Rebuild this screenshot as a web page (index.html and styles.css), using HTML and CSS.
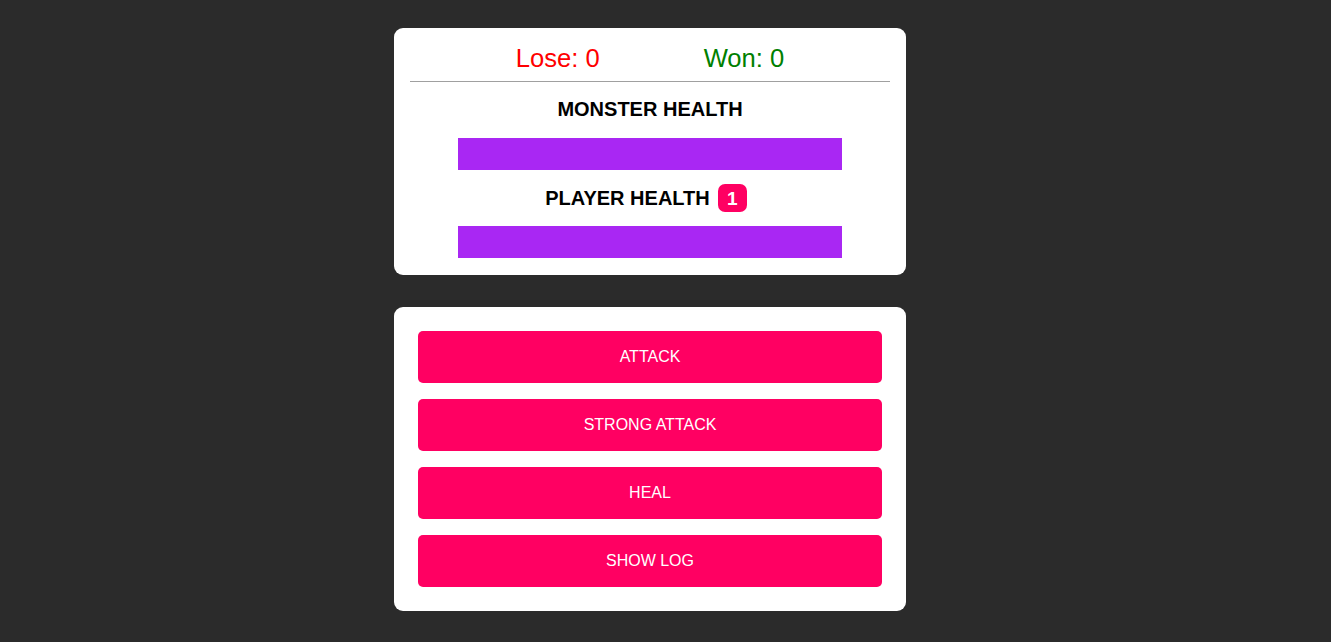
FILE: index.html
```html
<!DOCTYPE html>
<html lang="en">
<head>
<meta charset="utf-8">
<title>Monster Slayer</title>
<link rel="stylesheet" href="styles.css">
</head>
<body>
<main class="game">
  <section class="card health-card">
    <div class="scores">
      <span class="score lose">Lose: 0</span>
      <span class="score won">Won: 0</span>
    </div>
    <hr class="divider">
    <h2 class="health-title monster-title">MONSTER HEALTH</h2>
    <div class="bar"></div>
    <h2 class="health-title player-title">PLAYER HEALTH <span class="badge">1</span></h2>
    <div class="bar"></div>
  </section>
  <section class="card controls">
    <button class="btn">ATTACK</button>
    <button class="btn">STRONG ATTACK</button>
    <button class="btn">HEAL</button>
    <button class="btn">SHOW LOG</button>
  </section>
</main>
</body>
</html>
```
FILE: styles.css
```css
* { box-sizing: border-box; }
html, body {
  margin: 0;
  padding: 0;
  background: #2b2b2b;
  font-family: "Liberation Sans", Arial, sans-serif;
}
.game {
  padding: 28px 31px 0 0;
  display: flex;
  flex-direction: column;
  align-items: center;
}
.card {
  width: 512px;
  background: #ffffff;
  border-radius: 9px;
}
.health-card {
  padding: 16px 16px 17px;
}
.scores {
  display: flex;
  justify-content: center;
  gap: 104px;
  height: 29px;
  line-height: 29px;
  font-size: 25.6px;
  margin-bottom: 8px;
}
.lose { color: #ff0000; }
.won { color: #008000; }
.divider {
  margin: 0 0 16px;
  border: 0;
  border-top: 1px solid #a0a0a0;
  height: 0;
}
.health-title {
  margin: 0;
  font-size: 20px;
  font-weight: bold;
  color: #000;
  text-align: center;
  line-height: 23px;
}
.monster-title { margin-bottom: 17px; }
.player-title {
  margin: 14px 0;
  padding-right: 8px;
  height: 28px;
  display: flex;
  justify-content: center;
  align-items: center;
  gap: 8px;
}
.badge {
  display: inline-flex;
  align-items: center;
  justify-content: center;
  width: 29px;
  height: 28px;
  border-radius: 7px;
  background: #ff0062;
  color: #fff;
  font-size: 19px;
}
.bar {
  width: 384px;
  height: 32px;
  margin: 0 auto;
  background: #a927f3;
}
.controls {
  margin-top: 32px;
  padding: 24px;
  display: flex;
  flex-direction: column;
  gap: 16px;
}
.btn {
  height: 52px;
  border: 0;
  border-radius: 5px;
  background: #ff0062;
  color: #fff;
  font-family: "Liberation Sans", Arial, sans-serif;
  font-size: 16px;
  cursor: pointer;
}
```
